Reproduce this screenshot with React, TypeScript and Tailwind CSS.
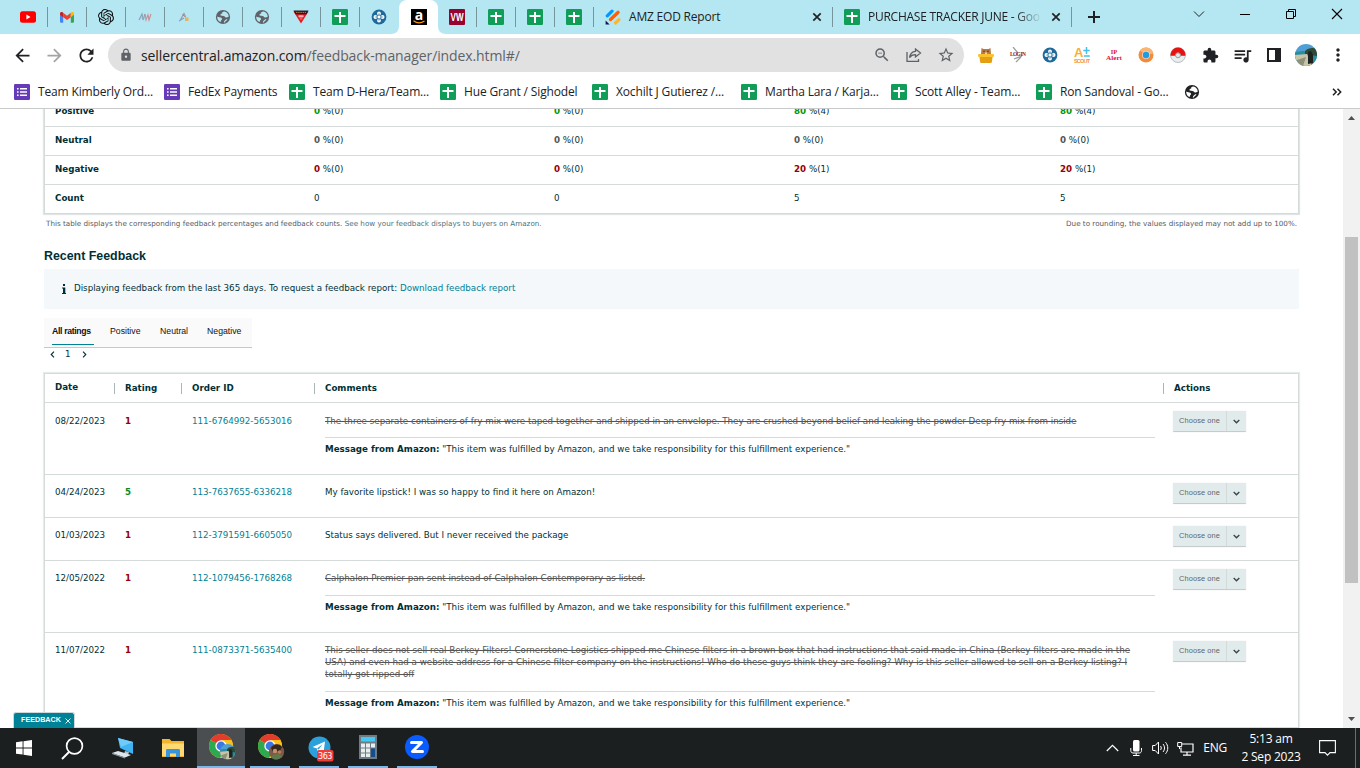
import React from 'react';
import { MdArrowBack, MdArrowForward, MdRefresh, MdLock, MdExtension, MdQueueMusic, MdStarBorder, MdMoreVert, MdZoomOut } from 'react-icons/md';
import { SiOpenai } from 'react-icons/si';

const AMAZON_MESSAGE = '"This item was fulfilled by Amazon, and we take responsibility for this fulfillment experience."';

const summary = [
  { label: 'Positive', color: 'text-[#090]', cells: [['0', '0'], ['0', '0'], ['80', '4'], ['80', '4']] },
  { label: 'Neutral', color: 'text-[#555]', cells: [['0', '0'], ['0', '0'], ['0', '0'], ['0', '0']] },
  { label: 'Negative', color: 'text-[#900]', cells: [['0', '0'], ['0', '0'], ['20', '1'], ['20', '1']] },
];

const feedback = [
  {
    date: '08/22/2023', rating: 1, order: '111-6764992-5653016', struck: true, height: 'h-[72px]', pad: 'pt-[12px]', gap: 'mt-[10px]',
    lines: ['The three separate containers of fry mix were taped together and shipped in an envelope. They are crushed beyond belief and leaking the powder Deep fry mix from inside'],
  },
  {
    date: '04/24/2023', rating: 5, order: '113-7637655-6336218', struck: false, height: 'h-[43px]', pad: 'pt-[11px]', gap: '',
    lines: ['My favorite lipstick! I was so happy to find it here on Amazon!'],
  },
  {
    date: '01/03/2023', rating: 1, order: '112-3791591-6605050', struck: false, height: 'h-[43px]', pad: 'pt-[11px]', gap: '',
    lines: ['Status says delivered. But I never received the package'],
  },
  {
    date: '12/05/2022', rating: 1, order: '112-1079456-1768268', struck: true, height: 'h-[72px]', pad: 'pt-[11px]', gap: 'mt-[11px]',
    lines: ['Calphalon Premier pan sent instead of Calphalon Contemporary as listed.'],
  },
  {
    date: '11/07/2022', rating: 1, order: '111-0873371-5635400', struck: true, height: 'h-[95px]', pad: 'pt-[11px]', gap: 'mt-[11px]',
    lines: [
      'This seller does not sell real Berkey Filters! Cornerstone Logistics shipped me Chinese filters in a brown box that had instructions that said made in China (Berkey filters are made in the',
      'USA) and even had a website address for a Chinese filter company on the instructions! Who do these guys think they are fooling? Why is this seller allowed to sell on a Berkey listing? I',
      'totally got ripped off',
    ],
  },
];

const bookmarks = [
  { label: 'Team Kimberly Ord...', form: true, width: 'w-[150px]' },
  { label: 'FedEx Payments', form: true, width: 'w-[125px]' },
  { label: 'Team D-Hera/Team...', form: false, width: 'w-[151px]' },
  { label: 'Hue Grant / Sighodel', form: false, width: 'w-[152px]' },
  { label: 'Xochilt J Gutierez /...', form: false, width: 'w-[149px]' },
  { label: 'Martha Lara / Karja...', form: false, width: 'w-[150px]' },
  { label: 'Scott Alley - Team...', form: false, width: 'w-[145px]' },
  { label: 'Ron Sandoval - Go...', form: false, width: 'w-[148px]' },
];

function SheetIcon() {
  return (
    <svg width="16" height="16" viewBox="0 0 16 16" className="shrink-0">
      <rect width="16" height="16" rx="1.2" fill="#0f9d58" />
      <path d="M7 3h2v11H7zM2.5 6h11v2h-11z" fill="#fff" />
    </svg>
  );
}

function FormIcon() {
  return (
    <svg width="16" height="16" viewBox="0 0 16 16" className="shrink-0">
      <rect width="16" height="16" rx="1.2" fill="#673ab7" />
      <path d="M3 4h1.6v1.6H3zM3 7.2h1.6v1.6H3zM3 10.4h1.6V12H3zM6 4h7v1.6H6zM6 7.2h7v1.6H6zM6 10.4h7V12H6z" fill="#fff" />
    </svg>
  );
}

function GlobeIcon({ color, bg }: { color: string; bg: string }) {
  return (
    <svg width="16" height="16" viewBox="0 0 16 16" className="shrink-0">
      <circle cx="8" cy="8" r="7.1" fill={color} />
      <path d="M9.2 2.6C7.6 2.7 6.8 3.6 7.2 4.6 5.8 4.6 5.2 5.6 5.6 6.6L8.6 7c1.2.2 1.4 1.6 2.6 1.5 1.2 0 1.4-.9 2.6-.8-.1-2.6-2-4.7-4.6-5.1zM2.2 7.4c1.4.8 3.2.6 4.2 1.4 1 .9.6 2 .1 2.3-.6.3-.4 1.4-1 1.8C3.4 12 2 10 2.2 7.400z" fill={bg} />
      <path d="M9.4 13.6c0-1.1.5-1.5 1.200-2 .6-.4.700-1 1.600-1.100" fill="none" stroke={bg} strokeWidth="1.200" />
    </svg>
  );
}

function HelmIcon() {
  return (
    <svg width="16" height="16" viewBox="0 0 16 16">
      <circle cx="8" cy="8" r="7.4" fill="#1f6a9a" />
      <g fill="#fff">
        <circle cx="8" cy="4.4" r="1.9" />
        <circle cx="8" cy="11.6" r="1.9" />
        <circle cx="4.4" cy="8" r="1.9" />
        <circle cx="11.6" cy="8" r="1.9" />
      </g>
      <path d="M8 4.500v7M4.500 8h7" stroke="#1f6a9a" strokeWidth="1" />
      <rect x="6.600" y="6.600" width="2.800" height="2.800" fill="#fff" />
    </svg>
  );
}

function YoutubeIcon() {
  return (
    <svg width="16" height="16" viewBox="0 0 16 16">
      <rect y="2.300" width="16" height="11.400" rx="2.500" fill="#f00" />
      <path d="M6.400 5.600v4.800L10.500 8z" fill="#fff" />
    </svg>
  );
}

function GmailIcon() {
  return (
    <svg width="16" height="16" viewBox="0 0 16 16">
      <path d="M1 4.500v8.300c0 .5.400.9.900.9h2.300V6.500z" fill="#4285f4" />
      <path d="M15 4.500v8.300c0 .5-.4.900-.9.900h-2.300V6.500z" fill="#34a853" />
      <path d="M4.200 3.800v4.400L8 11l3.800-2.800V3.800L8 6.700z" fill="#ea4335" />
      <path d="M1 4.300v1.500l3.200 2.400V3.800l-.6-.5C2.500 2.500 1 3.200 1 4.300z" fill="#c5221f" />
      <path d="M15 4.300v1.500l-3.200 2.400V3.800l.6-.5c1.100-.8 2.600-.1 2.600 1z" fill="#fbbc04" />
    </svg>
  );
}

function RedwhiteIcon() {
  return (
    <svg width="16" height="16" viewBox="0 0 16 16" opacity=".75">
      <path d="M2 11L5 5l1 6 2-6" fill="none" stroke="#6f86a8" strokeWidth="1.100" />
      <path d="M8 5l1 6 2-5 1 5 2-6" fill="none" stroke="#d86a70" strokeWidth="1.100" />
      <path d="M3 9h7" stroke="#9aa7b8" strokeWidth=".8" />
    </svg>
  );
}

function SmallLogoIcon() {
  return (
    <svg width="16" height="16" viewBox="0 0 16 16" opacity=".85">
      <path d="M4 11.500L8 4.500l1.500 3M3 12l5-3" fill="none" stroke="#8292ad" strokeWidth="1.100" />
      <path d="M6.500 5.500L10 8.500" stroke="#c25b5b" strokeWidth="1" />
      <rect x="9" y="8.500" width="3.500" height="3.500" fill="#e8b04a" />
    </svg>
  );
}

function TriangleIcon() {
  return (
    <svg width="16" height="16" viewBox="0 0 16 16">
      <path d="M.5 2.500h15L8 14.500z" fill="#e31b23" />
      <path d="M.5 1.500h15l-2 3.800h-11z" fill="#2b1a2c" />
      <path d="M3 3.400h10" stroke="#b9803c" strokeWidth="1" strokeDasharray="1.500 .7" />
      <path d="M5 7h6L8 11.500z" fill="#f7595f" />
      <path d="M5.500 7h5" stroke="#fff" strokeWidth="1" />
    </svg>
  );
}

function AmazonIcon() {
  return (
    <svg width="16" height="16" viewBox="0 0 16 16">
      <rect width="16" height="16" fill="#000" />
      <text x="8" y="11" textAnchor="middle" fontSize="14" fontWeight="bold" fontFamily="Open Sans, sans-serif" fill="#fff">a</text>
      <path d="M2.500 11.800c3.300 2.500 7.700 2.500 11 .2" fill="none" stroke="#f90" strokeWidth="1.200" />
    </svg>
  );
}

function VwIcon() {
  return (
    <svg width="16" height="16" viewBox="0 0 16 16">
      <rect width="16" height="16" rx="1" fill="#97032f" />
      <text x="8" y="12.300" textAnchor="middle" fontSize="11.500" textLength="13" lengthAdjust="spacingAndGlyphs" fontWeight="bold" fontFamily="Liberation Sans, sans-serif" fill="#fff">VW</text>
    </svg>
  );
}

function JotformIcon() {
  return (
    <svg width="16" height="16" viewBox="0 0 16 16" strokeLinecap="round" fill="none">
      <path d="M2.300 6.800L7 2.200" stroke="#0099ff" strokeWidth="3.200" />
      <path d="M5.500 10.500L13 3.400" stroke="#ff6100" strokeWidth="3.400" />
      <path d="M10.500 14L14 10.600" stroke="#ffb629" strokeWidth="3.200" />
      <path d="M.6 11.600v3.900h4z" fill="#0a1551" />
    </svg>
  );
}

function Close() {
  return (
    <svg width="10" height="10" viewBox="0 0 10 10" className="shrink-0">
      <path d="M1.300 1.300l7.400 7.400M8.700 1.300L1.300 8.700" stroke="#202124" strokeWidth="1.700" />
    </svg>
  );
}

function Tab({ children, divider = true }: { children: React.ReactNode; divider?: boolean }) {
  return (
    <div className="flex h-[34px] w-[39px] shrink-0 items-center">
      <div className="flex w-[38px] justify-center">{children}</div>
      {divider && <div className="h-[20px] w-px bg-[#79959c]" />}
    </div>
  );
}

function TabStrip() {
  return (
    <div className="flex h-[34px] bg-[#b4e7f2] pl-[9px] text-[12px] text-[#202124]">
      <Tab><YoutubeIcon /></Tab>
      <Tab><GmailIcon /></Tab>
      <Tab><SiOpenai size={16} color="#111" /></Tab>
      <Tab><RedwhiteIcon /></Tab>
      <Tab><SmallLogoIcon /></Tab>
      <Tab><GlobeIcon color="#5f6368" bg="#b4e7f2" /></Tab>
      <Tab><GlobeIcon color="#5f6368" bg="#b4e7f2" /></Tab>
      <Tab><TriangleIcon /></Tab>
      <Tab><SheetIcon /></Tab>
      <Tab divider={false}><HelmIcon /></Tab>
      <div className="relative flex h-[34px] w-[39px] shrink-0 items-center justify-center rounded-t-[8px] bg-white">
        <AmazonIcon />
        <svg width="55" height="8" viewBox="0 0 55 8" className="absolute bottom-0 left-[-8px]">
          <path d="M0 8c5 0 8-3 8-8v8zM55 8c-5 0-8-3-8-8v8z" fill="#fff" />
        </svg>
      </div>
      <Tab><VwIcon /></Tab>
      <Tab><SheetIcon /></Tab>
      <Tab><SheetIcon /></Tab>
      <Tab><SheetIcon /></Tab>
      <div className="flex w-[239px] shrink-0 items-center pl-[11px]">
        <JotformIcon />
        <span className="ml-2 flex-1 tracking-[-0.2px]">AMZ EOD Report</span>
        <Close />
        <div className="ml-[10px] h-[20px] w-px bg-[#79959c]" />
      </div>
      <div className="flex w-[239px] shrink-0 items-center pl-[11px]">
        <SheetIcon />
        <span className="ml-2 w-[174px] overflow-hidden whitespace-nowrap tracking-[-0.25px] [mask-image:linear-gradient(to_right,#000_85%,transparent)]">PURCHASE TRACKER JUNE - Goo</span>
        <span className="flex-1" />
        <Close />
        <div className="ml-[10px] h-[20px] w-px bg-[#79959c]" />
      </div>
      <svg width="12" height="12" viewBox="0 0 12 12" className="mt-[11px] ml-[16px]">
        <path d="M6 0v12M0 6h12" stroke="#202124" strokeWidth="2" />
      </svg>
      <div className="mt-[8px] ml-[93px] flex gap-[34px]">
        <svg width="12" height="12" viewBox="0 0 12 12"><path d="M1 3.500l5 5 5-5" fill="none" stroke="#222" /></svg>
        <svg width="12" height="12" viewBox="0 0 12 12"><path d="M1 6.500h10" stroke="#000" /></svg>
        <svg width="12" height="12" viewBox="0 0 12 12"><path d="M1.500 3.500h7v7h-7zM3.500 3.500v-2h7v7h-2" fill="none" stroke="#000" /></svg>
        <svg width="12" height="12" viewBox="0 0 12 12"><path d="M1 1l10 10M11 1L1 11" stroke="#000" strokeWidth="1.100" /></svg>
      </div>
    </div>
  );
}

function Avatar({ size }: { size: number }) {
  return (
    <svg width={size} height={size} viewBox="0 0 22 22">
      <clipPath id="avatar"><circle cx="11" cy="11" r="11" /></clipPath>
      <g clipPath="url(#avatar)">
        <rect width="22" height="22" fill="#4f9fd6" />
        <path d="M0 8l8-1 14 2v13H0z" fill="#2b8c9c" />
        <path d="M10 7c3-3 8-4 12-2v7l-12-2z" fill="#2e4a35" />
        <path d="M0 11l12-1 5 12H0z" fill="#c9c3a8" />
        <path d="M2 16l9-3-3 9H2z" fill="#8c9178" />
        <path d="M13 8l3-1 2 4v8l-5 1z" fill="#1c2320" />
      </g>
    </svg>
  );
}

function Extensions() {
  const cell = 'flex w-8 justify-center';
  return (
    <div className="ml-[6px] flex items-center text-[#202124]">
      <div className={cell}>
        <svg width="16" height="16" viewBox="0 0 16 16">
          <path d="M3.500 1l2 1h5l2-1 .5 6H3z" fill="#b97a43" />
          <circle cx="6" cy="4.300" r=".7" fill="#332" /><circle cx="10" cy="4.300" r=".7" fill="#332" />
          <path d="M7 5.500h2v1.500H7z" fill="#f0d9bd" />
          <rect y="7" width="16" height="3" rx="1.300" fill="#fac22c" />
          <path d="M1.500 10h13l-.5 4.500c0 1-1 1.500-2 1.500H4c-1 0-2-.5-2-1.500z" fill="#e59f12" />
        </svg>
      </div>
      <div className={cell}>
        <svg width="18" height="16" viewBox="0 0 18 16">
          <path d="M4 0l5 6M5 12l8-3M12 10l-5 5" stroke="#9b9b9b" strokeWidth="1.200" />
          <text x="9" y="8.500" textAnchor="middle" fontSize="5.500" fontWeight="bold" fontFamily="Liberation Serif, serif" textLength="16" fill="#8c2026">LOG IN</text>
        </svg>
      </div>
      <div className={cell}><HelmIcon /></div>
      <div className={cell}>
        <svg width="16" height="16" viewBox="0 0 16 16">
          <text x="0" y="10" fontSize="13" fontWeight="bold" fontFamily="Liberation Sans, sans-serif" fill="#fbb034">A</text>
          <path d="M12.500 0v7M9.300 3.500h6.400M9.800 9h6" stroke="#45c1e8" strokeWidth="1.500" />
          <text x="0" y="15.500" fontSize="5.500" fontWeight="bold" fontFamily="Liberation Sans, sans-serif" textLength="16" fill="#f79433">SCOUT</text>
        </svg>
      </div>
      <div className={cell}>
        <svg width="16" height="16" viewBox="0 0 16 16">
          <g fill="#e0151b" fontWeight="bold" fontFamily="Liberation Serif, serif" fontSize="6.500" textAnchor="middle">
            <text x="8" y="7">IP</text>
            <text x="8" y="13.300" textLength="16" lengthAdjust="spacingAndGlyphs">Alert</text>
          </g>
        </svg>
      </div>
      <div className={cell}>
        <svg width="16" height="16" viewBox="0 0 16 16">
          <circle cx="8" cy="8" r="7.500" fill="#f08c3c" />
          <path d="M8 .5a7.500 7.500 0 0 1 7.300 6L8 8 2 3.500C3.500 1.500 5.500.5 8 .5z" fill="#f9b573" />
          <circle cx="8" cy="8" r="4" fill="#e9d3c5" />
          <circle cx="8" cy="8" r="3.200" fill="#1d9ce5" />
        </svg>
      </div>
      <div className={cell}>
        <svg width="16" height="16" viewBox="0 0 16 16">
          <circle cx="8" cy="8" r="7.500" fill="#e9efee" stroke="#a9b3b3" strokeWidth=".8" />
          <path d="M.5 8a7.500 7.500 0 0 1 15 0z" fill="#e5120f" />
          <path d="M.5 8.500h15" stroke="#84706f" />
          <circle cx="8" cy="8.300" r="2.500" fill="#e4e4e4" stroke="#999" />
        </svg>
      </div>
      <div className={cell}><MdExtension size={17} /></div>
      <div className={cell}><MdQueueMusic size={21} /></div>
      <div className={cell}>
        <svg width="14" height="14" viewBox="0 0 14 14"><path d="M0 0h14v14H0zM2 2v10h6V2z" fill="#202124" fillRule="evenodd" /></svg>
      </div>
      <div className={cell}><Avatar size={22} /></div>
      <div className={cell}><MdMoreVert size={20} /></div>
    </div>
  );
}

function Toolbar() {
  return (
    <div className="flex h-[42px] items-center bg-white">
      <div className="ml-[6px] flex items-center">
        <div className="flex w-8 justify-center"><MdArrowBack size={21} color="#202124" /></div>
        <div className="flex w-8 justify-center"><MdArrowForward size={21} color="#a2a4a6" /></div>
        <div className="flex w-8 justify-center"><MdRefresh size={21} color="#202124" /></div>
      </div>
      <div className="ml-[6px] flex h-[34px] w-[856px] items-center rounded-full bg-[#e1e1e1] pl-[11px] text-[#5f6368]">
        <MdLock size={14} />
        <span className="ml-[8px] flex-1 text-[14px] tracking-[-0.1px] whitespace-nowrap">
          <span className="text-[#202124]">sellercentral.amazon.com</span>/feedback-manager/index.html#/
        </span>
        <div className="flex w-8 justify-center"><MdZoomOut size={18} /></div>
        <div className="flex w-8 justify-center">
          <svg width="16" height="14" viewBox="0 0 16 14" fill="none" stroke="#5f6368" strokeWidth="1.300">
            <path d="M1 4v9.300h11.500V11" />
            <path d="M9.500 1l5 4-5 4V6.700C6.500 6.700 4.700 7.800 3.500 9.700 4 6 6 3.600 9.500 3.300z" />
          </svg>
        </div>
        <div className="mr-[2px] flex w-8 justify-center"><MdStarBorder size={18} /></div>
      </div>
      <Extensions />
    </div>
  );
}

function Bookmarks() {
  return (
    <div className="flex h-[33px] items-center border-b border-[#c9cacb] bg-white pl-[14px] text-[12px] text-[#202124]">
      {bookmarks.map((b) => (
        <div key={b.label} className={`flex shrink-0 items-center gap-2 whitespace-nowrap tracking-[-0.15px] ${b.width}`}>
          {b.form ? <FormIcon /> : <SheetIcon />}
          <span>{b.label}</span>
        </div>
      ))}
      <GlobeIcon color="#202124" bg="#fff" />
      <svg width="10" height="8" viewBox="0 0 10 8" className="ml-[132px]">
        <path d="M1 .7L4.200 4 1 7.300M5.500.7L8.700 4 5.500 7.300" fill="none" stroke="#202124" strokeWidth="1.500" />
      </svg>
    </div>
  );
}

function SummaryTable() {
  return (
    <div className="-mt-[11px] w-[1255px] border-x border-b border-[#d5dbdb] shadow-[0_0_1px_1px_#dfe5e5]">
      {summary.map((row) => (
        <div key={row.label} className="grid h-[29px] grid-cols-[269px_240px_240px_266px_1fr] items-center border-b border-[#d5dbdb]">
          <div className="pl-[10px] font-bold">{row.label}</div>
          {row.cells.map(([percent, count], i) => (
            <div key={i}><b className={row.color}>{percent}</b> %({count})</div>
          ))}
        </div>
      ))}
      <div className="grid h-[28px] grid-cols-[269px_240px_240px_266px_1fr] items-center">
        <div className="pl-[10px] font-bold">Count</div>
        <div>0</div>
        <div>0</div>
        <div>5</div>
        <div>5</div>
      </div>
    </div>
  );
}

function ChooseOne() {
  return (
    <div className="flex h-[21px] w-[73px] items-stretch rounded-[1px] border-b border-[#c6cccc] bg-[#e2ebec] font-[Liberation_Sans,sans-serif] text-[7.400px] text-[#5b676b] shadow-[0_0_1px_#c6cccc]">
      <span className="flex w-[54px] items-center justify-center border-r border-[#d2dada] tracking-[0.1px]">Choose one</span>
      <span className="flex flex-1 items-center justify-center">
        <svg width="7" height="5" viewBox="0 0 7 5"><path d="M.7.900L3.500 3.700 6.300.900" fill="none" stroke="#37474b" strokeWidth="1.400" /></svg>
      </span>
    </div>
  );
}

function FeedbackTable() {
  const cols = 'grid grid-cols-[69px_67px_133px_849px_1fr]';
  return (
    <div className="mt-[12px] w-[1255px] border border-[#d5dbdb] shadow-[0_0_1px_1px_#e6ebeb]">
      <div className={`${cols} h-[29px] items-center border-b border-[#d5dbdb] font-bold`}>
        <div className="pl-[10px]">Date</div>
        {['Rating', 'Order ID', 'Comments', 'Actions'].map((title) => (
          <div key={title} className="border-l border-[#aab7b8] pl-[10px] leading-[11px]">{title}</div>
        ))}
      </div>
      {feedback.map((f) => (
        <div key={f.order} className={`${cols} ${f.height} border-b border-[#d5dbdb] leading-[12px]`}>
          <div className={`${f.pad} pl-[10px]`}>{f.date}</div>
          <div className={`${f.pad} pl-[11px] font-bold ${f.rating > 3 ? 'text-[#0a8a1f]' : 'text-[#900]'}`}>{f.rating}</div>
          <div className={`${f.pad} pl-[11px] tracking-[-0.02px] text-[#007f94]`}>{f.order}</div>
          <div className={`${f.pad} pr-[8px] pl-[11px] whitespace-nowrap`}>
            <div className={f.struck ? 'text-[#555] line-through' : ''}>
              {f.lines.map((line) => <div key={line}>{line}</div>)}
            </div>
            {f.struck && (
              <div className={`${f.gap} border-t border-[#d5dbdb] pt-[5px]`}>
                <b>Message from Amazon:</b> {AMAZON_MESSAGE}
              </div>
            )}
          </div>
          <div className="pt-[8px] pl-[10px]"><ChooseOne /></div>
        </div>
      ))}
    </div>
  );
}

function Page() {
  return (
    <div className="relative flex h-[619px] overflow-hidden bg-white font-['DejaVu_Sans',Verdana,sans-serif] text-[8.710px] text-[#002f36]">
      <div className="w-[1343px] pl-[44px]">
        <SummaryTable />
        <div className="mt-[4px] flex w-[1255px] justify-between px-[2px] text-[7.200px] leading-[12px] text-[#545b64]">
          <div>This table displays the corresponding feedback percentages and feedback counts. <span className="text-[#4d7380]">See how your feedback displays to buyers on Amazon.</span></div>
          <div>Due to rounding, the values displayed may not add up to 100%.</div>
        </div>
        <h2 className="mt-[18px] font-[Liberation_Sans,sans-serif] text-[12.400px] leading-[16px] font-bold">Recent Feedback</h2>
        <div className="mt-[5px] flex h-[40px] w-[1255px] items-center bg-[#f4f8fa] pl-[18px]">
          <svg width="5" height="10" viewBox="0 0 5 10"><path d="M1 0h2v2H1zM0 3.500h3.300V9H4v1H0V9h1V4.500H0z" fill="#002f36" /></svg>
          <span className="ml-[7px]">Displaying feedback from the last 365 days. To request a feedback report: <span className="text-[#007f94]">Download feedback report</span></span>
        </div>
        <div className="mt-[9px] flex h-[30px] w-[208px] border-b border-[#c4c8c8] bg-[#fafafa] pl-[8px] font-[Liberation_Sans,sans-serif] text-[8.710px] leading-[27px] text-[#111]">
          <div className="h-[27px] w-[42px] border-b border-[#008296] font-bold tracking-[-0.35px]">All ratings</div>
          <div className="ml-[16px] w-[50px]">Positive</div>
          <div className="w-[47px]">Neutral</div>
          <div>Negative</div>
        </div>
        <div className="flex h-[13px] items-center pl-[6px]">
          <svg width="5" height="7" viewBox="0 0 5 7"><path d="M4 .7L1.200 3.500 4 6.300" fill="none" stroke="#002f36" strokeWidth="1.100" /></svg>
          <span className="ml-[10px] w-[17px]">1</span>
          <svg width="5" height="7" viewBox="0 0 5 7"><path d="M1 .7L3.800 3.500 1 6.300" fill="none" stroke="#002f36" strokeWidth="1.100" /></svg>
        </div>
        <FeedbackTable />
      </div>
      <div className="flex w-[17px] flex-col items-center bg-[#f1f1f1]">
        <svg width="7" height="4" viewBox="0 0 7 4" className="mt-[7px]"><path d="M0 4l3.500-4L7 4z" fill="#505050" /></svg>
        <div className="mt-[117px] h-[346px] w-[13px] bg-[#c1c1c1]" />
        <svg width="7" height="4" viewBox="0 0 7 4" className="mt-[134px]"><path d="M0 0l3.500 4L7 0z" fill="#505050" /></svg>
      </div>
      <div className="absolute bottom-0 left-[13px] flex h-[16px] w-[62px] items-center gap-[4px] rounded-t-[3px] border border-b-0 border-[#cfd8da] bg-[#008296] pl-[7px] font-[Liberation_Sans,sans-serif] text-[7.200px] font-bold text-white">
        FEEDBACK
        <svg width="6" height="6" viewBox="0 0 6 6"><path d="M.5.500l5 5M5.500.500l-5 5" stroke="#fff" strokeWidth=".9" /></svg>
      </div>
    </div>
  );
}

function ChromeIcon({ photo }: { photo: 'coast' | 'people' }) {
  return (
    <svg width="27" height="26" viewBox="0 0 27 26">
      <circle cx="12" cy="12" r="12" fill="#fbc116" />
      <path d="M12 12L1.600 6A12 12 0 0 1 22.400 6z" fill="#e33b2e" />
      <path d="M1.600 6A12 12 0 0 0 11 23.950L17 14.500 12 12z" fill="#2da94f" />
      <path d="M12 6h10.400A12 12 0 0 1 11 23.950l6.500-9z" fill="#fbc116" />
      <circle cx="12" cy="12" r="5.700" fill="#fff" />
      <circle cx="12" cy="12" r="4.400" fill="#3b78e7" />
      {photo === 'coast' ? (
        <g transform="translate(11 10) scale(.7)"><Avatar size={22} /></g>
      ) : (
        <g>
          <circle cx="18.500" cy="17.800" r="7.700" fill="#7c5a48" />
          <path d="M13 14c2-4 8-5 11-1l-2 4-7 1z" fill="#33261f" />
          <circle cx="17" cy="17" r="2.200" fill="#c98f6c" />
          <circle cx="21.500" cy="18" r="1.800" fill="#b97c5d" />
          <path d="M13 23c1-3 9-4 11-1-2 4-8 5-11 1z" fill="#5c7a4c" />
        </g>
      )}
    </svg>
  );
}

function Taskbar() {
  const item = 'flex h-[40px] w-[40px] items-center justify-center border-b-2';
  return (
    <div className="flex h-[40px] bg-[#1b1f20] text-white">
      <div className="flex h-[40px] w-[48px] items-center justify-center">
        <svg width="16" height="16" viewBox="0 0 16 16"><path d="M0 2.200L6.600 1.300v6.200H0zM7.500 1.200L16 0v7.500H7.500zM0 8.400h6.600v6.200L0 13.700zM7.500 8.400H16V16l-8.500-1.200z" fill="#fff" /></svg>
      </div>
      <div className="flex h-[40px] w-[48px] items-center justify-center">
        <svg width="23" height="23" viewBox="0 0 23 23" fill="none" stroke="#fff"><circle cx="13.500" cy="9" r="7.900" strokeWidth="1.700" /><path d="M8 15l-7 7" strokeWidth="2" /></svg>
      </div>
      <div className="flex h-[40px] w-[54px] items-center justify-center">
        <svg width="24" height="22" viewBox="0 0 24 22">
          <path d="M7 1l15 4v12L9 11z" fill="#41b3f2" />
          <path d="M7 1l15 4-12 5z" fill="#6fccfa" />
          <path d="M14 14l4 1-1 3-4-1z" fill="#b8c4cc" />
          <path d="M1 16l6-2 13 4-6 2.500z" fill="#dce6ec" />
          <path d="M1 16l13 4.500v1L1 17z" fill="#95a5af" />
        </svg>
      </div>
      <div className="flex h-[40px] w-[47px] items-center justify-center pr-[5px]">
        <svg width="22" height="18" viewBox="0 0 22 18" className="ml-[4px]">
          <path d="M0 0h7.500l2 2H22v16H0z" fill="#f3b52f" />
          <path d="M0 4.500h22V17H0z" fill="#ffda72" />
          <path d="M4 18v-6.500c0-1 .7-1.500 1.500-1.500h11c1 0 1.500.7 1.500 1.500V18h-4v-3.500H8V18z" fill="#3a94dc" />
        </svg>
      </div>
      <div className="flex h-[40px] w-[48px] items-center justify-center border-b-2 border-[#76b9ed] bg-[#4b4e50] pl-[3px]"><ChromeIcon photo="coast" /></div>
      <div className="ml-[5px] flex gap-[9px]">
        <div className={`${item} border-[#76b9ed] pl-[3px]`}><ChromeIcon photo="people" /></div>
        <div className={`${item} border-[#76b9ed]`}>
          <svg width="26" height="26" viewBox="0 0 26 26" className="mt-[3px] ml-[4px]">
            <circle cx="11.500" cy="11.500" r="11" fill="#2ba0da" />
            <path d="M4.500 11L17 5.500 15.500 17l-4-3-2 2-.500-3.500z" fill="#fff" />
            <path d="M9 12.500l5.500-4.300-3.800 5.300z" fill="#2ba0da" />
            <rect x="9" y="14" width="16.500" height="11.500" rx="2" fill="#f23c34" />
            <text x="17.200" y="22.500" textAnchor="middle" fontSize="8" textLength="14.500" fontFamily="DejaVu Sans, sans-serif" fill="#fff">363</text>
          </svg>
        </div>
        <div className={`${item} border-[#76b9ed]`}>
          <svg width="18" height="24" viewBox="0 0 18 24">
            <rect width="18" height="24" fill="#6f7c85" />
            <rect x="2" y="2" width="14" height="4.500" fill="#45c8f1" />
            <path d="M2 8.500h4v4H2zM7 8.500h4v4H7zM12 8.500h4v4h-4zM2 13.500h4v4H2zM7 13.500h4v4H7zM2 18.500h4V22H2zM7 18.500h4V22H7z" fill="#e8edf0" />
            <path d="M12 13.500h4V22h-4z" fill="#124f8c" />
          </svg>
        </div>
        <div className={`${item} border-[#76b9ed]`}>
          <svg width="24" height="24" viewBox="0 0 24 24">
            <circle cx="12" cy="12" r="12" fill="#0b5cff" />
            <path d="M6.500 7.500h10L7.500 16.500h10" fill="none" stroke="#fff" strokeWidth="3" strokeLinejoin="round" strokeLinecap="round" />
          </svg>
        </div>
      </div>
      <div className="ml-auto flex items-center text-[12px]">
        <svg width="13" height="8" viewBox="0 0 13 8"><path d="M.8 7L6.500 1.300 12.200 7" fill="none" stroke="#fff" strokeWidth="1.200" /></svg>
        <svg width="12" height="16" viewBox="0 0 12 16" className="ml-[11px]"><rect x="3" width="6.500" height="11.500" rx="1.500" fill="#fff" /><path d="M.8 8v2.500c0 1.500.7 2.500 2.200 2.500h6.500c1.300 0 2-1 2-2.500V8M6.200 13v2.500M3 15.500h6.500" fill="none" stroke="#fff" /></svg>
        <svg width="18" height="14" viewBox="0 0 18 14" className="ml-[10px]" fill="none" stroke="#fff"><path d="M.6 4.500h2.600L6.500 1v12L3.200 9.500H.6z" /><path d="M8.500 5c1 1.200 1 2.800 0 4M11 3c2 2.400 2 5.600 0 8M13.500 1.200c3 3.500 3 8.100 0 11.600" /></svg>
        <svg width="17" height="15" viewBox="0 0 17 15" className="ml-[7px]" fill="none" stroke="#fff"><path d="M5 3h11v8H4V6.500M10 11v3M6 14.200h8" strokeWidth="1.200" /><path d="M.7 1.500h4v4h-4zM2.500 5.500V8" /></svg>
        <span className="ml-[9px] tracking-[-0.2px]">ENG</span>
        <div className="ml-[11px] w-[66px] text-center leading-[18px] tracking-[-0.2px] whitespace-nowrap">
          <div>5:13 am</div>
          <div>2 Sep 2023</div>
        </div>
        <svg width="17" height="16" viewBox="0 0 17 16" className="ml-[15px]"><path d="M.6.600h15.800v12H11L8.500 15.200 6 12.600H.6z" fill="none" stroke="#fff" strokeWidth="1.100" /></svg>
        <div className="ml-[19px] h-[40px] w-px bg-[#6b6e6f]" />
        <div className="w-[4px]" />
      </div>
    </div>
  );
}

export default function App() {
  return (
    <div className="h-[768px] w-[1360px] overflow-hidden bg-white font-['Open_Sans','Noto_Sans',sans-serif]">
      <TabStrip />
      <Toolbar />
      <Bookmarks />
      <Page />
      <Taskbar />
    </div>
  );
}
